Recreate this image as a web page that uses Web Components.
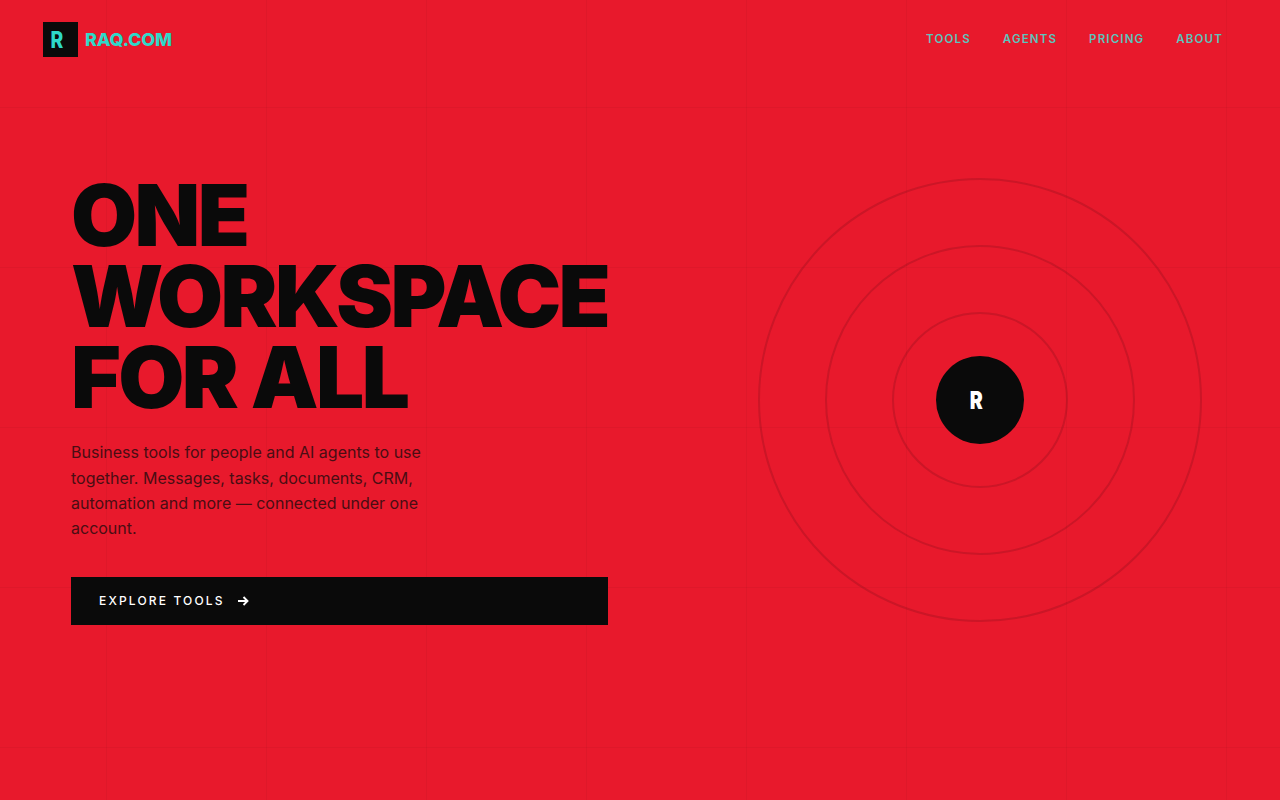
<!DOCTYPE html>
<html lang="en">
<head>
<meta charset="utf-8">
<title>RAQ.COM</title>
<style>
  html, body { margin: 0; height: 100%; }
  body { background: #e8192c; font-family: Inter, "Liberation Sans", sans-serif; overflow: hidden; }
</style>
</head>
<body>
<raq-page>
  <raq-nav slot="nav">
    <a href="#tools">TOOLS</a>
    <a href="#agents">AGENTS</a>
    <a href="#pricing">PRICING</a>
    <a href="#about">ABOUT</a>
  </raq-nav>
  <raq-hero slot="left"></raq-hero>
  <raq-rings slot="right"></raq-rings>
</raq-page>

<script>
// Small helper so each element only has to give its markup
class Base extends HTMLElement {
  constructor(html) {
    super();
    this.attachShadow({ mode: 'open' }).innerHTML = html;
  }
}

class RaqPage extends Base {
  constructor() {
    super(`
      <style>
        :host { display: block; position: relative; width: 1280px; height: 800px; overflow: hidden; background: #e8192c; }
        .grid {
          position: absolute; inset: 0;
          background-image:
            linear-gradient(to right, rgba(0,0,0,.04) 1px, transparent 1px),
            linear-gradient(to bottom, rgba(0,0,0,.04) 1px, transparent 1px);
          background-size: 160px 160px;
          background-position: 106px 107px;
        }
        /* header sits over the hero, which centres on the full window */
        .top { position: absolute; left: 0; right: 0; top: 0; padding: 22px 57px 0 43px; }
        .main {
          position: relative; height: 800px; box-sizing: border-box;
          display: grid; grid-template-columns: 609px 600px; align-items: center; padding-left: 71px;
        }
      </style>
      <div class="grid"></div>
      <div class="main"><slot name="left"></slot><slot name="right"></slot></div>
      <div class="top"><slot name="nav"></slot></div>
    `);
  }
}

class RaqNav extends Base {
  constructor() {
    super(`
      <style>
        :host { display: flex; align-items: center; justify-content: space-between; height: 35px; }
        .brand { display: flex; align-items: center; gap: 7px; }
        .mark {
          width: 35px; height: 35px; background: #0a0a0a; color: #2ed9c9;
          display: flex; align-items: center; justify-content: center; padding-right: 7px; box-sizing: border-box;
          font: 800 23.5px/1 Inter, sans-serif;
        }
        .mark span { display: block; transform: scaleX(.82); }
        .name { color: #2ed9c9; font: 800 18px/1 Inter, sans-serif; letter-spacing: -.01em; }
        nav { display: flex; gap: 32px; padding-top: 1px; }
        ::slotted(a) {
          color: #5cc4bd; text-decoration: none;
          font: 600 11.52px/1 Inter, sans-serif; letter-spacing: .1em;
        }
      </style>
      <div class="brand"><div class="mark"><span>R</span></div><div class="name">RAQ.COM</div></div>
      <nav><slot></slot></nav>
    `);
  }
}

class RaqHero extends Base {
  constructor() {
    super(`
      <style>
        :host { display: flex; flex-direction: column; width: 537px; }
        h1 {
          margin: 0; color: #0a0a0a; font: 900 85.33px/81px Inter, sans-serif;
          letter-spacing: -.03em;
        }
        p {
          margin: 22px 0 0; width: 380px; color: #4a0d13;
          font: 400 16px/25.4px Inter, sans-serif;
        }
        a {
          margin-top: 35px; height: 48px; background: #0a0a0a; color: #fff;
          display: flex; align-items: center; gap: 12px; padding-left: 28px;
          text-decoration: none; font: 500 12px/1 Inter, sans-serif; letter-spacing: .18em;
        }
        svg { display: block; }
      </style>
      <h1>ONE WORKSPACE FOR ALL</h1>
      <p>Business tools for people and AI agents to use together. Messages, tasks, documents, CRM, automation and more — connected under one account.</p>
      <a href="#tools">EXPLORE TOOLS
        <svg width="12" height="12" viewBox="0 0 12 12" fill="none" stroke="#fff" stroke-width="1.9"><path d="M1 6h9.5M6.5 2l4 4-4 4"/></svg>
      </a>
    `);
  }
}

class RaqRings extends Base {
  constructor() {
    super(`
      <style>
        :host { display: flex; align-items: center; justify-content: center; position: relative; height: 444px; }
        .ring { position: absolute; border-radius: 50%; box-sizing: border-box; border: 2px solid rgba(90,10,20,.2); }
        .a { width: 444px; height: 444px; }
        .b { width: 310px; height: 310px; }
        .c { width: 176px; height: 176px; }
        .core {
          position: relative; width: 88px; height: 88px; border-radius: 50%; background: #0a0a0a; color: #fff;
          display: flex; align-items: center; justify-content: center; padding-right: 7px; box-sizing: border-box;
          font: 900 25px/1 Inter, sans-serif;
        }
        .core span { display: block; transform: scaleX(.78); }
      </style>
      <div class="ring a"></div><div class="ring b"></div><div class="ring c"></div>
      <div class="core"><span>R</span></div>
    `);
  }
}

customElements.define('raq-page', RaqPage);
customElements.define('raq-nav', RaqNav);
customElements.define('raq-hero', RaqHero);
customElements.define('raq-rings', RaqRings);
</script>
</body>
</html>
